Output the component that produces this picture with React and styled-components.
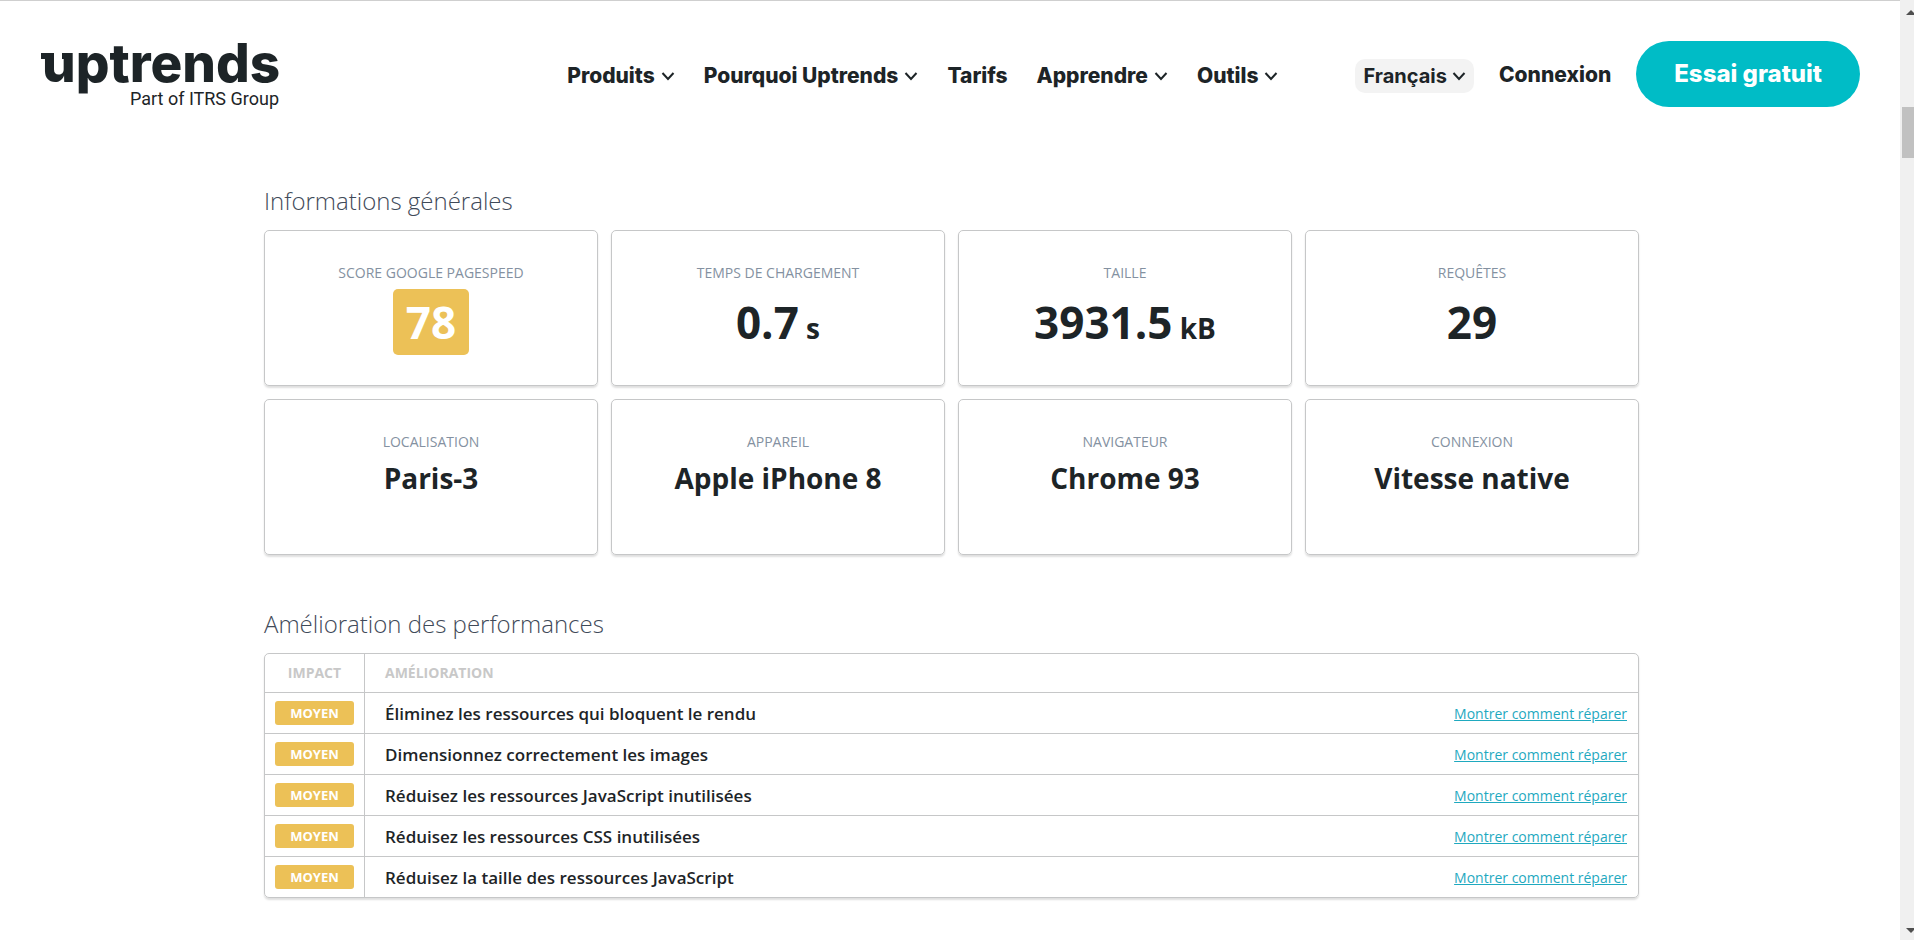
import React from 'react';
import styled, { createGlobalStyle } from 'styled-components';

const ink = '#1d2427';
const line = '#c6c7c8';
const amber = '#ecc157';
const teal = '#00bcc6';

const GlobalStyle = createGlobalStyle`
  *, *::before, *::after { box-sizing: border-box; }
  body {
    margin: 0;
    background: #fff;
    color: ${ink};
    font-family: "Open Sans", "Noto Sans", sans-serif;
  }
`;

const Shell = styled.div`
  display: flex;
  min-height: 100vh;
`;

const Page = styled.div`
  flex: 1;
  min-width: 0;
  border-top: 1px solid #cfcfcf;
`;

const Header = styled.header`
  display: flex;
  align-items: flex-start;
  padding: 40px 40px 0;
  height: 184px;
  font-family: Inter, sans-serif;
`;

const Logo = styled.a`
  display: flex;
  flex-direction: column;
  align-items: flex-end;
  width: 239px;
  color: ${ink};
  text-decoration: none;
`;

const Wordmark = styled.svg`
  display: block;
  width: 239px;
  height: 48px;
  overflow: visible;
  font-family: Inter, sans-serif;
  font-size: 53px;
  font-weight: 800;
  fill: ${ink};
`;

const Tagline = styled.span`
  font: 400 18px/20px Roboto, sans-serif;
`;

const Nav = styled.nav`
  display: flex;
  align-items: center;
  gap: 29px;
  height: 68px;
  margin-left: auto;
  margin-right: 77px;
`;

const Actions = styled.div`
  display: flex;
  align-items: center;
  gap: 25px;
  height: 66px;
`;

const NavLink = styled.a`
  display: inline-flex;
  align-items: center;
  gap: 6px;
  padding-top: 2px;
  color: ${ink};
  font-size: 21px;
  font-weight: 800;
  line-height: 28px;
  text-decoration: none;
  white-space: nowrap;
`;

const LanguageButton = styled.button`
  display: inline-flex;
  align-items: center;
  gap: 5px;
  height: 34px;
  margin-top: 3px;
  padding: 0 8px;
  border: 0;
  border-radius: 10px;
  background: #f3f3f3;
  color: ${ink};
  font: 700 20px/28px Inter, sans-serif;
  cursor: pointer;
`;

const TrialButton = styled.button`
  height: 66px;
  padding: 0 38px;
  border: 0;
  border-radius: 33px;
  background: ${teal};
  color: #fff;
  font: 800 24px/30px Inter, sans-serif;
  white-space: nowrap;
  cursor: pointer;
`;

const ChevronIcon = styled.svg`
  display: block;
  width: 14px;
  height: 10px;
  fill: none;
  stroke: ${ink};
  stroke-width: 2;
`;

const Main = styled.main`
  max-width: 1378px;
  margin: 0 auto;
  padding-left: 3px;
`;

const Section = styled.section`
  & + & {
    margin-top: 53px;
  }
`;

const Title = styled.h2`
  margin: 0 0 13px;
  color: #3f4a59;
  font-size: 24px;
  font-weight: 300;
  line-height: 32px;
`;

const Cards = styled.div`
  display: grid;
  grid-template-columns: repeat(4, 1fr);
  gap: 13px;
`;

const Card = styled.article`
  height: 156px;
  padding-top: 32px;
  border: 1px solid ${line};
  border-radius: 5px;
  box-shadow: 0 2px 2px rgba(0, 0, 0, 0.13);
  text-align: center;
`;

const Label = styled.h3`
  margin: 0 0 6px;
  color: #8491a1;
  font-size: 14px;
  font-weight: 400;
  line-height: 20px;
  text-transform: uppercase;
`;

const Figure = styled.div`
  display: inline-block;
  padding: 0 13px;
  border-radius: 5px;
  background: ${({ $score }) => ($score ? amber : 'transparent')};
  color: ${({ $score }) => ($score ? '#fff' : ink)};
  font-size: 44px;
  font-weight: 700;
  line-height: 66px;
`;

const Unit = styled.span`
  font-size: 28px;
`;

const Name = styled.div`
  font-size: 28px;
  font-weight: 700;
  line-height: 40px;
`;

const Table = styled.table`
  width: 100%;
  border: 1px solid ${line};
  border-radius: 5px;
  border-spacing: 0;
  box-shadow: 0 2px 2px rgba(0, 0, 0, 0.13);
`;

const HeadCell = styled.th`
  height: 38px;
  padding: 0;
  padding-left: ${({ $first }) => ($first ? 0 : 20)}px;
  border-right: ${({ $first }) => ($first ? `1px solid ${line}` : 0)};
  color: #c8c8c8;
  font-size: 14px;
  font-weight: 700;
  line-height: 20px;
  text-align: ${({ $first }) => ($first ? 'center' : 'left')};
  text-transform: uppercase;
`;

const ImpactCell = styled.td`
  width: 100px;
  height: 41px;
  padding: 0 10px;
  border-top: 1px solid ${line};
  border-right: 1px solid ${line};
`;

const TextCell = styled.td`
  padding: 1px 0 0 20px;
  border-top: 1px solid ${line};
  font-size: 17px;
  font-weight: 600;
  line-height: 24px;
`;

const LinkCell = styled.td`
  padding: 0 11px 0 0;
  border-top: 1px solid ${line};
  text-align: right;
`;

const Badge = styled.span`
  display: block;
  border-radius: 3px;
  background: ${amber};
  color: #fff;
  font-size: 13px;
  font-weight: 700;
  line-height: 24px;
  text-align: center;
`;

const FixLink = styled.a`
  color: #1fa9bf;
  font-size: 14px;
  line-height: 20px;
`;

const ScrollTrack = styled.div`
  display: flex;
  flex-direction: column;
  width: 14px;
  padding: 9px 0 6px 2px;
  background: #f0f0f0;
`;

const ScrollArrow = styled.svg`
  display: block;
  width: 12px;
  height: 6px;
  fill: #505050;
`;

const ScrollThumb = styled.div`
  height: 51px;
  margin: 92px 0 auto;
  background: #c1c1c1;
`;

const Chevron = () => (
  <ChevronIcon viewBox="0 0 14 10" aria-hidden="true">
    <path d="M1.500 2 L7 8 L12.500 2" />
  </ChevronIcon>
);

const links = [
  { text: 'Produits', menu: true },
  { text: 'Pourquoi Uptrends', menu: true },
  { text: 'Tarifs' },
  { text: 'Apprendre', menu: true },
  { text: 'Outils', menu: true },
];

const figures = [
  { label: 'Score Google PageSpeed', value: '78', score: true },
  { label: 'Temps de chargement', value: '0.7', unit: 's' },
  { label: 'Taille', value: '3931.5', unit: 'kB' },
  { label: 'Requêtes', value: '29' },
];

const names = [
  { label: 'Localisation', value: 'Paris-3' },
  { label: 'Appareil', value: 'Apple iPhone 8' },
  { label: 'Navigateur', value: 'Chrome 93' },
  { label: 'Connexion', value: 'Vitesse native' },
];

const improvements = [
  'Éliminez les ressources qui bloquent le rendu',
  'Dimensionnez correctement les images',
  'Réduisez les ressources JavaScript inutilisées',
  'Réduisez les ressources CSS inutilisées',
  'Réduisez la taille des ressources JavaScript',
];

export default function App() {
  return (
    <Shell>
      <GlobalStyle />
      <Page>
        <Header>
          <Logo href="#">
            <Wordmark viewBox="0 0 239 48" role="img" aria-label="uptrends">
              <text x="2" y="41">uptrends</text>
              <rect x="1" y="12" width="9" height="6" />
              <rect x="22" y="12" width="9" height="6" />
            </Wordmark>
            <Tagline>Part of ITRS Group</Tagline>
          </Logo>
          <Nav>
            {links.map(({ text, menu }) => (
              <NavLink key={text} href="#">
                {text}
                {menu && <Chevron />}
              </NavLink>
            ))}
          </Nav>
          <Actions>
            <LanguageButton type="button">
              Français
              <Chevron />
            </LanguageButton>
            <NavLink href="#">Connexion</NavLink>
            <TrialButton type="button">Essai gratuit</TrialButton>
          </Actions>
        </Header>
        <Main>
          <Section>
            <Title>Informations générales</Title>
            <Cards>
              {figures.map(({ label, value, unit, score }) => (
                <Card key={label}>
                  <Label>{label}</Label>
                  <Figure $score={score}>
                    {value}
                    {unit && <Unit> {unit}</Unit>}
                  </Figure>
                </Card>
              ))}
              {names.map(({ label, value }) => (
                <Card key={label}>
                  <Label>{label}</Label>
                  <Name>{value}</Name>
                </Card>
              ))}
            </Cards>
          </Section>
          <Section>
            <Title>Amélioration des performances</Title>
            <Table>
              <thead>
                <tr>
                  <HeadCell scope="col" $first>Impact</HeadCell>
                  <HeadCell scope="col" colSpan={2}>Amélioration</HeadCell>
                </tr>
              </thead>
              <tbody>
                {improvements.map((text) => (
                  <tr key={text}>
                    <ImpactCell><Badge>MOYEN</Badge></ImpactCell>
                    <TextCell>{text}</TextCell>
                    <LinkCell><FixLink href="#">Montrer comment réparer</FixLink></LinkCell>
                  </tr>
                ))}
              </tbody>
            </Table>
          </Section>
        </Main>
      </Page>
      <ScrollTrack aria-hidden="true">
        <ScrollArrow viewBox="0 0 12 6"><path d="M4 6 L9 1 L14 6 Z" /></ScrollArrow>
        <ScrollThumb />
        <ScrollArrow viewBox="0 0 12 6"><path d="M4 0 L9 5 L14 0 Z" /></ScrollArrow>
      </ScrollTrack>
    </Shell>
  );
}
